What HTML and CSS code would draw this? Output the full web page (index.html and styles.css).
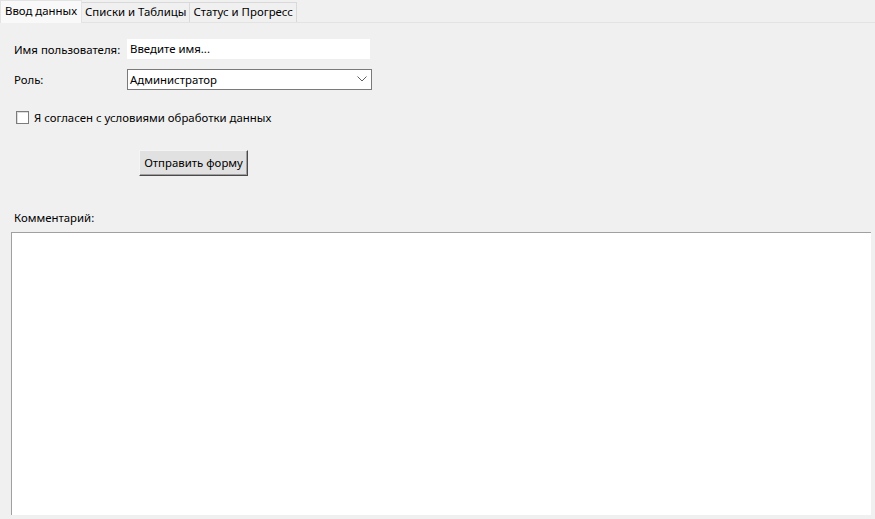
FILE: index.html
```html
<!DOCTYPE html>
<html lang="ru">
<head>
<meta charset="utf-8">
<link rel="stylesheet" href="styles.css">
</head>
<body>
<div class="window">
  <div class="tabs">
    <div class="tab active">Ввод данных</div>
    <div class="tab">Списки и Таблицы</div>
    <div class="tab">Статус и Прогресс</div>
  </div>
  <div class="panel">
    <div class="form">
      <div class="row">
        <span class="label">Имя пользователя:</span>
        <div class="entry">Введите имя...</div>
      </div>
      <div class="row row-role">
        <span class="label">Роль:</span>
        <div class="combo">
          <span>Администратор</span>
          <svg class="arrow" width="10" height="6" viewBox="0 0 10 6"><path d="M0.5 0.5 L5 5 L9.5 0.5" fill="none" stroke="#606060" stroke-width="1"/></svg>
        </div>
      </div>
      <label class="check">
        <span class="box"></span>
        <span>Я согласен с условиями обработки данных</span>
      </label>
      <div class="btn-row">
        <button class="btn">Отправить форму</button>
      </div>
      <div class="comment-label">Комментарий:</div>
    </div>
    <div class="textarea"></div>
  </div>
</div>
</body>
</html>
```
FILE: styles.css
```css
* { box-sizing: border-box; }
html, body {
  margin: 0;
  padding: 0;
  width: 875px;
  height: 519px;
  overflow: hidden;
  background: #f0f0f0;
  font-family: "Noto Sans", "Liberation Sans", sans-serif;
  font-size: 11.4px;
  color: #000;
}
.window {
  display: flex;
  flex-direction: column;
  height: 519px;
}
.tabs {
  display: flex;
  align-items: flex-end;
  height: 23px;
  border-bottom: 1px solid #e3e3e3;
}
.tab {
  height: 20px;
  padding: 0 3px;
  line-height: 18px;
  background: #f0f0f0;
  border: 1px solid #d9d9d9;
  border-bottom: none;
  margin-left: -1px;
  white-space: nowrap;
}
.tab:first-child { margin-left: 0; }
.tab.active {
  height: 23px;
  line-height: 20px;
  padding: 0 4px;
  background: #f9f9f9;
  border-color: #e3e3e3;
  position: relative;
  z-index: 1;
  margin-bottom: -1px;
}
.panel {
  flex: 1;
  display: flex;
  flex-direction: column;
  padding: 0 5px 4px 11px;
  background: #f0f0f0;
}
.form {
  padding-left: 3px;
}
.row {
  display: flex;
  align-items: center;
  height: 20px;
  margin-top: 16px;
}
.row-role { margin-top: 10px; }
.label {
  width: 113px;
  flex: none;
  white-space: nowrap;
}
.entry {
  width: 243px;
  height: 20px;
  background: #fff;
  padding-left: 3px;
  line-height: 19px;
}
.combo {
  width: 245px;
  height: 21px;
  background: #fff;
  border: 1px solid #7a7a7a;
  display: flex;
  align-items: center;
  justify-content: space-between;
  padding: 0 4px 0 2px;
}
.arrow { display: block; }
.check {
  display: flex;
  align-items: center;
  gap: 5px;
  margin-top: 20px;
  margin-left: 2px;
  height: 16px;
}
.box {
  width: 13px;
  height: 13px;
  border: 1px solid #7c7c7c;
  background: #fff;
  box-shadow: inset 1px 1px 0 #dcdcdc;
}
.btn-row {
  padding-left: 125px;
  margin-top: 25px;
}
.btn {
  display: block;
  width: 109px;
  height: 26px;
  background: #e1e1e1;
  border: 1px solid #f4f4f4;
  border-right-color: #4a4a4a;
  border-bottom-color: #4a4a4a;
  box-shadow: inset -1px -1px 0 #a0a0a0;
  font-family: inherit;
  font-size: 11.4px;
  color: #000;
  padding: 0 0 2px 0;
}
.comment-label {
  margin-top: 34px;
  height: 16px;
  line-height: 16px;
}
.textarea {
  margin-top: 6px;
  flex: 1;
  background: #fff;
  border-top: 1px solid #a0a0a0;
  border-left: 1px solid #a0a0a0;
  width: 860px;
}
```
